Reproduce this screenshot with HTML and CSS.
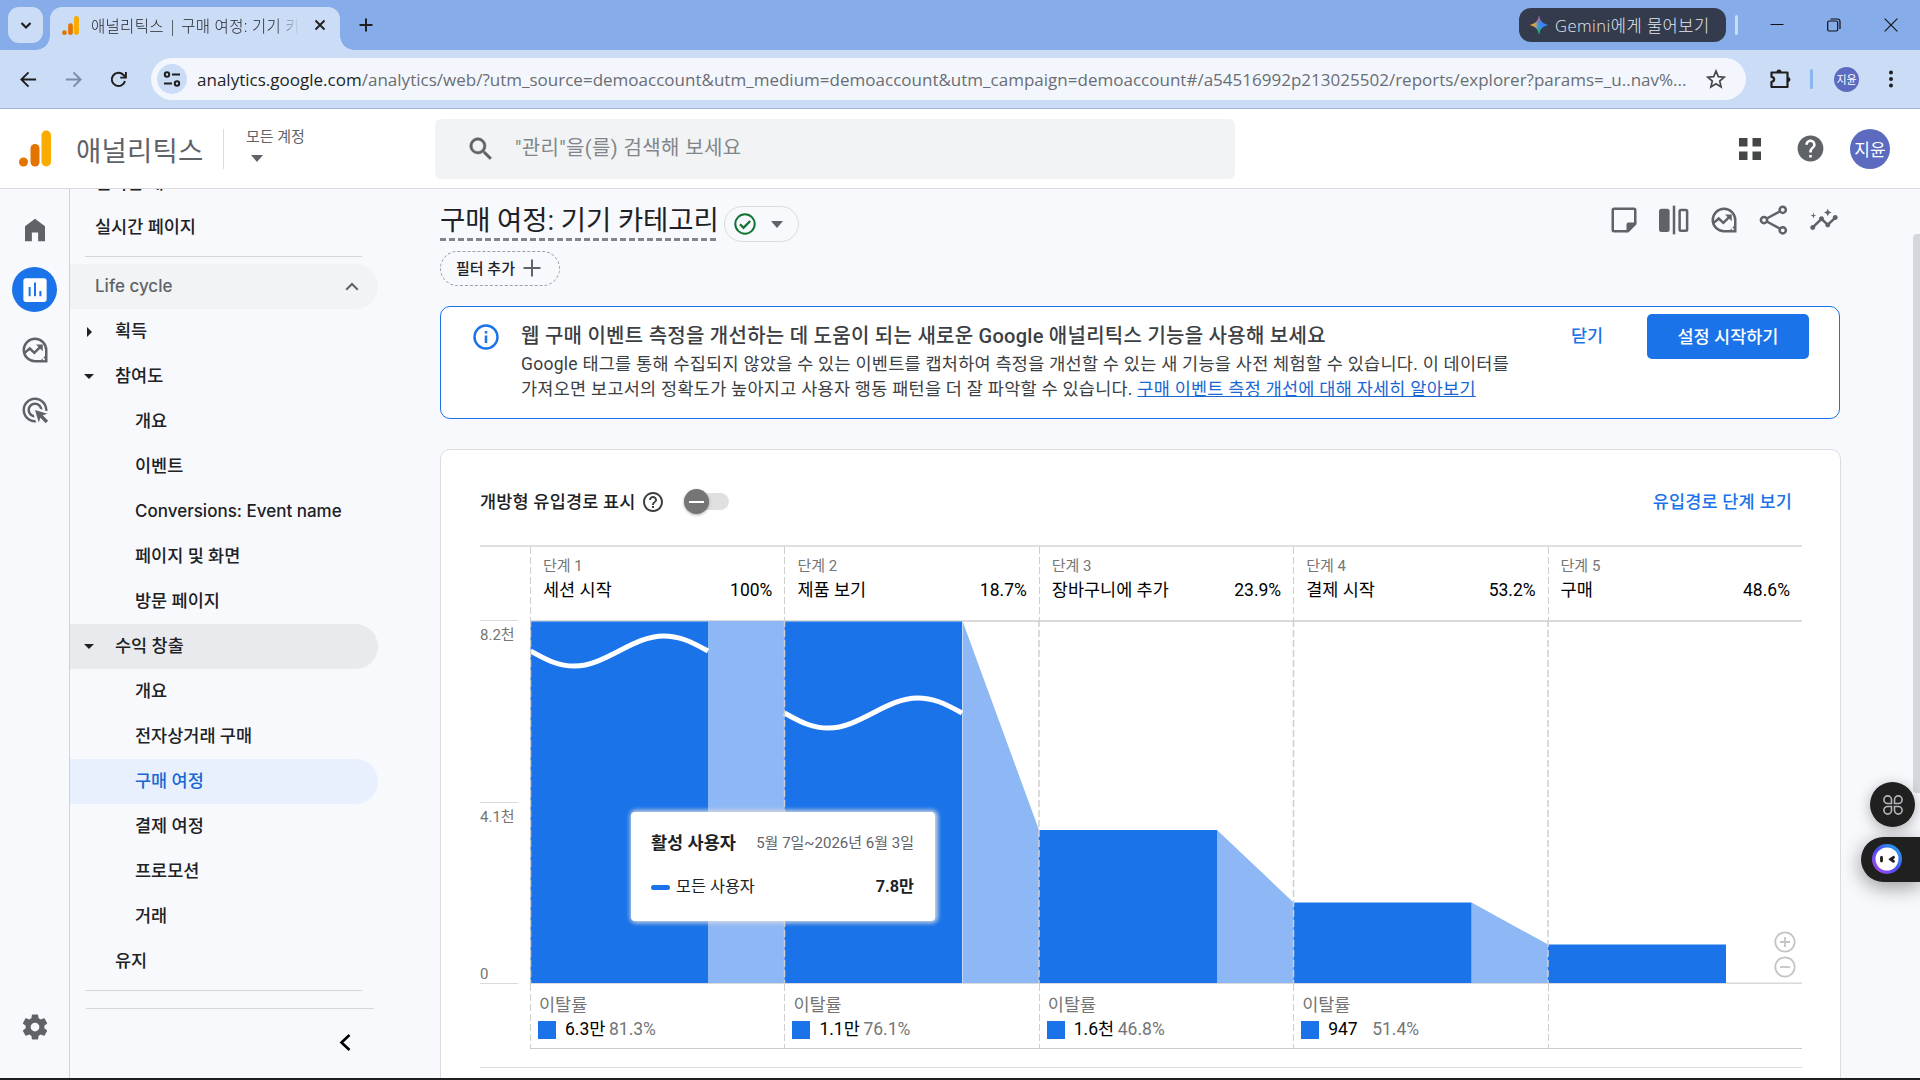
FILE: index.html
```html
<!DOCTYPE html>
<html lang="ko">
<head>
  <meta charset="UTF-8" />
  <meta name="viewport" content="width=device-width, initial-scale=1" />
  <title>애널리틱스 | 구매 여정: 기기 카테고리</title>
  <link rel="stylesheet" href="styles.css">
</head>
<body>

  <svg class="defs" aria-hidden="true">
    <symbol id="ga-logo" viewBox="0 0 32 36">
      <rect x="22.500" y="0" width="9.500" height="36" rx="4.700" fill="#f9ab00" />
      <rect x="11.500" y="13.500" width="9" height="22.500" rx="4.500" fill="#e37400" />
      <circle cx="4.500" cy="31.500" r="4.500" fill="#e37400" />
    </symbol>
    <symbol id="explore" viewBox="0 0 24 24">
      <path fill="none" stroke="currentColor" stroke-width="2" d="M21 12a9 9 0 1 0-9 9h9z" />
      <path fill="currentColor" d="M21 14v7h-7c3-.5 6-3 7-7z" />
      <circle cx="19" cy="19.300" r=".9" fill="#f8f9fc" />
      <path fill="none" stroke="currentColor" stroke-width="2" d="M3.500 14.500l4.300-3.700 3.700 3.500 5-5" />
      <path fill="currentColor" d="M12.800 7.500h5.400v5.400z" />
    </symbol>
  </svg>

  <!-- 브라우저 탭 -->
  <div class="tabstrip">
    <button class="tab-search" aria-label="탭 검색">
      <svg width="16" height="16" viewBox="0 0 16 16"><path d="M3.500 6l4.500 4.500L12.500 6" fill="none" stroke="#1f1f1f" stroke-width="2.200" /></svg>
    </button>
    <div class="tab">
      <svg class="favicon"><use href="#ga-logo" /></svg>
      <span class="tab-title">애널리틱스 | 구매 여정: 기기 카테고리</span>
      <svg width="12" height="12" viewBox="0 0 12 12"><path d="M1.500 1.500l9 9M10.500 1.500l-9 9" stroke="#1f1f1f" stroke-width="1.900" /></svg>
    </div>
    <svg class="new-tab" width="14" height="14" viewBox="0 0 14 14"><path d="M7 .5v13M.5 7h13" stroke="#1f1f1f" stroke-width="2" /></svg>
    <div class="window-side">
      <div class="gemini">
        <svg width="20" height="20" viewBox="0 0 20 20">
          <defs>
            <linearGradient id="gem" x1="0" y1=".5" x2="1" y2=".5">
              <stop offset="0" stop-color="#fbbc04" /><stop offset=".3" stop-color="#c8a35a" /><stop offset=".5" stop-color="#3b8bf5" /><stop offset="1" stop-color="#3186ff" />
            </linearGradient>
            <linearGradient id="gem-v" x1="0" y1="0" x2="0" y2="1">
              <stop offset="0" stop-color="#ee4d5d" /><stop offset=".42" stop-color="#ee4d5d" stop-opacity="0" /><stop offset=".6" stop-color="#0ebc5f" stop-opacity="0" /><stop offset=".85" stop-color="#0ebc5f" />
            </linearGradient>
          </defs>
          <path fill="url(#gem)" d="M10 .5c1 5.500 4 8.500 9.500 9.500-5.500 1-8.500 4-9.500 9.500C9 14 6 11 .5 10 6 9 9 6 10 .5z" />
          <path fill="url(#gem-v)" d="M10 .5c1 5.500 4 8.500 9.500 9.500-5.500 1-8.500 4-9.500 9.500C9 14 6 11 .5 10 6 9 9 6 10 .5z" />
        </svg>
        <span>Gemini에게 물어보기</span>
      </div>
      <i class="strip-sep"></i>
      <svg class="win" width="14" height="14" viewBox="0 0 14 14"><path d="M.5 6.500h13" stroke="#111" /></svg>
      <svg class="win" width="14" height="14" viewBox="0 0 14 14"><g fill="none" stroke="#111" stroke-width="1.200"><rect x=".7" y="3" width="10" height="10" rx="1.500" /><path d="M3.500 1h7a2.500 2.500 0 0 1 2.500 2.500v7.500" /></g></svg>
      <svg class="win" width="14" height="14" viewBox="0 0 14 14"><path d="M.7.7l12.600 12.600M13.300.7L.7 13.300" stroke="#111" stroke-width="1.100" /></svg>
    </div>
  </div>

  <!-- 주소 표시줄 -->
  <div class="toolbar">
    <svg class="nav-btn" viewBox="0 0 20 20"><path d="M18 10H3M10 2.500L2.500 10l7.500 7.500" fill="none" stroke="#1f1f1f" stroke-width="2" /></svg>
    <svg class="nav-btn" viewBox="0 0 20 20"><path d="M2 10h15M10 2.500l7.500 7.500-7.500 7.500" fill="none" stroke="#7c8ba6" stroke-width="2" /></svg>
    <svg class="nav-btn" viewBox="0 0 20 20"><path d="M16.800 11.500A7 7 0 1 1 15 5l2 2" fill="none" stroke="#1f1f1f" stroke-width="2.100" /><path d="M17.800 2v6h-6" fill="none" stroke="#1f1f1f" stroke-width="2" /></svg>
    <div class="omnibox">
      <span class="site-info">
        <svg width="18" height="18" viewBox="0 0 18 18"><g fill="none" stroke="#1f1f1f" stroke-width="2"><circle cx="4" cy="4.500" r="2.200" /><path d="M9 4.500h8M1 13.500h8" /><circle cx="14" cy="13.500" r="2.200" /></g></svg>
      </span>
      <span class="url"><b>analytics.google.com</b>/analytics/web/?utm_source=demoaccount&amp;utm_medium=demoaccount&amp;utm_campaign=demoaccount#/a54516992p213025502/reports/explorer?params=_u..nav%...</span>
      <svg width="20" height="20" viewBox="0 0 20 20"><path d="M10 2l2.300 5.600 6 .5-4.600 3.900 1.400 5.900L10 14.700l-5.100 3.200L6.300 12 1.700 8.100l6-.5z" fill="none" stroke="#474747" stroke-width="1.700" /></svg>
    </div>
    <svg class="puzzle" width="22" height="22" viewBox="0 0 22 22"><path d="M2.500 4.500h16v14.500h-16v-5.200c3.500-.4 3.500-4.600 0-5z" fill="none" stroke="#1f1f1f" stroke-width="2.200" stroke-linejoin="round" /><path d="M7.500 4a2.500 2.500 0 0 1 5 0zM19 9a2.500 2.500 0 0 1 0 5z" fill="#1f1f1f" /></svg>
    <i class="bar-sep"></i>
    <span class="avatar avatar-small">지윤</span>
    <svg class="more" width="6" height="18" viewBox="0 0 6 18"><g fill="#1f1f1f"><circle cx="3" cy="2.500" r="2" /><circle cx="3" cy="9" r="2" /><circle cx="3" cy="15.500" r="2" /></g></svg>
  </div>

  <header class="ga-header">
    <svg class="ga-logo"><use href="#ga-logo" /></svg>
    <span class="product">애널리틱스</span>
    <div class="account">
      <span>모든 계정</span>
      <i class="caret"></i>
    </div>
    <div class="search">
      <svg width="30" height="30" viewBox="0 0 24 24"><path fill="#5f6368" stroke="#5f6368" stroke-width=".4" d="M15.500 14h-.79l-.28-.27A6.471 6.471 0 0 0 16 9.500 6.500 6.500 0 1 0 9.500 16c1.610 0 3.090-.59 4.230-1.570l.27.28v.79l5 4.990L20.490 19l-4.990-5zm-6 0C7.010 14 5 11.990 5 9.500S7.010 5 9.500 5 14 7.010 14 9.500 11.990 14 9.500 14z" /></svg>
      <span>"관리"을(를) 검색해 보세요</span>
    </div>
    <div class="header-icons">
      <svg width="22" height="22" viewBox="0 0 22 22"><path fill="#444746" d="M0 0h8.500v8.500H0zM13.500 0H22v8.500h-8.500zM0 13.500h8.500V22H0zM13.500 13.500H22V22h-8.500z" /></svg>
      <svg width="31" height="31" viewBox="0 0 24 24"><path fill="#5f6368" d="M12 2C6.480 2 2 6.480 2 12s4.480 10 10 10 10-4.480 10-10S17.520 2 12 2zm1 17h-2v-2h2v2zm2.070-7.750l-.9.92C13.450 12.900 13 13.500 13 15h-2v-.5c0-1.100.45-2.100 1.170-2.830l1.240-1.260c.37-.36.59-.86.59-1.410 0-1.100-.9-2-2-2s-2 .9-2 2H8c0-2.210 1.790-4 4-4s4 1.790 4 4c0 .88-.36 1.680-.93 2.250z" /></svg>
      <span class="avatar">지윤</span>
    </div>
  </header>

  <div class="app">
    <nav class="rail" aria-label="기본 메뉴">
      <span class="rail-item"><svg viewBox="0 0 24 24"><path fill="currentColor" d="M4 21V9l8-6 8 6v12h-5.500v-7h-5v7z" /></svg></span>
      <span class="rail-item active"><svg viewBox="0 0 24 24"><path fill="currentColor" d="M19.300 2.500H4.700c-1.200 0-2 .9-2 2v15c0 1.200.8 2 2 2h14.600c1.100 0 2-.8 2-2v-15c0-1.100-.9-2-2-2zM8.500 17H6.900V9.500h1.600V17zm4.300 0h-1.600V6h1.600v11zm4.300 0h-1.600v-4.200h1.600V17z" /></svg></span>
      <span class="rail-item"><svg><use href="#explore" /></svg></span>
      <span class="rail-item"><svg viewBox="0 0 24 24"><path fill="currentColor" d="M11.710 17.990C8.530 17.840 6 15.220 6 12c0-3.310 2.690-6 6-6 3.220 0 5.840 2.530 5.990 5.710l-2.100-.63C15.480 9.310 13.890 8 12 8c-2.210 0-4 1.790-4 4 0 1.890 1.310 3.480 3.080 3.890l.63 2.100zM22 12c0 .3-.01.6-.04.9l-1.970-.59c.01-.1.01-.21.01-.31 0-4.420-3.580-8-8-8s-8 3.580-8 8 3.580 8 8 8c.1 0 .21 0 .31-.01l.59 1.970c-.3.03-.6.04-.9.04-5.520 0-10-4.480-10-10S6.480 2 12 2s10 4.480 10 10zm-3.770 4.260L22 15l-10-3 3 10 1.260-3.770 4.270 4.270 1.980-1.980-4.280-4.260z" /></svg></span>
      <span class="rail-item rail-settings"><svg viewBox="0 0 24 24"><path fill="currentColor" d="M19.430 12.980c.04-.32.07-.64.07-.98s-.03-.66-.07-.98l2.110-1.650c.19-.15.24-.42.12-.64l-2-3.460c-.12-.22-.39-.3-.61-.22l-2.490 1c-.52-.4-1.080-.73-1.690-.98l-.38-2.650A.488.488 0 0 0 14 2h-4c-.25 0-.46.18-.49.42l-.38 2.650c-.61.25-1.170.59-1.690.98l-2.490-1c-.23-.09-.49 0-.61.22l-2 3.460c-.13.22-.07.49.12.64l2.110 1.650c-.04.32-.07.65-.07.98s.03.66.07.98l-2.110 1.650c-.19.15-.24.42-.12.64l2 3.460c.12.22.39.3.61.22l2.490-1c.52.4 1.080.73 1.690.98l.38 2.650c.03.24.24.42.49.42h4c.25 0 .46-.18.49-.42l.38-2.650c.61-.25 1.170-.59 1.690-.98l2.490 1c.23.09.49 0 .61-.22l2-3.460c.12-.22.07-.49-.12-.64l-2.110-1.650zM12 15.500c-1.930 0-3.500-1.570-3.500-3.500s1.570-3.500 3.500-3.500 3.500 1.570 3.500 3.500-1.570 3.500-3.500 3.500z" /></svg></span>
    </nav>

    <nav class="sidenav" aria-label="보고서">
      <div class="row top scrolled">실시간 개요</div>
      <div class="row top">실시간 페이지</div>
      <hr>
      <div class="row section">Life cycle
        <svg width="14" height="9" viewBox="0 0 14 9"><path d="M1.200 7.800L7 2l5.800 5.800" fill="none" stroke="#5f6368" stroke-width="2" /></svg>
      </div>
      <div class="row group closed">획득</div>
      <div class="row group open">참여도</div>
      <div class="row">개요</div>
      <div class="row">이벤트</div>
      <div class="row latin">Conversions: Event name</div>
      <div class="row">페이지 및 화면</div>
      <div class="row">방문 페이지</div>
      <div class="row group open hovered">수익 창출</div>
      <div class="row">개요</div>
      <div class="row">전자상거래 구매</div>
      <div class="row selected">구매 여정</div>
      <div class="row">결제 여정</div>
      <div class="row">프로모션</div>
      <div class="row">거래</div>
      <div class="row group">유지</div>
      <hr>
      <div class="collapse">
        <svg width="12" height="17" viewBox="0 0 12 17"><path d="M10.500 1L2.500 8.500l8 7.500" fill="none" stroke="#000" stroke-width="2.600" /></svg>
      </div>
    </nav>

    <main class="report">
      <div class="title-row">
        <h1>구매 여정: 기기 카테고리</h1>
        <span class="status">
          <svg width="22" height="22" viewBox="0 0 22 22"><g fill="none" stroke="#137333" stroke-width="2"><circle cx="11" cy="11" r="9.700" /><path d="M6 11.300l3.500 3.500L16.200 8" stroke-width="2.300" /></g></svg>
          <i class="caret"></i>
        </span>
        <div class="actions">
          <svg viewBox="0 0 24 24"><path fill="none" stroke="currentColor" stroke-width="2" stroke-linejoin="round" d="M4 3h16a1 1 0 0 1 1 1v11l-6 6H4a1 1 0 0 1-1-1V4a1 1 0 0 1 1-1z" /><path fill="currentColor" d="M14 22v-6.500q0-1.500 1.500-1.500H22z" /></svg>
          <svg viewBox="0 0 24 24"><rect x="0" y="3" width="8.500" height="18.500" rx="2" fill="currentColor" /><path d="M12 .5v23" stroke="currentColor" stroke-width="2" /><rect x="16.500" y="4" width="6" height="16.500" rx="1" fill="none" stroke="currentColor" stroke-width="2" /></svg>
          <svg><use href="#explore" /></svg>
          <svg viewBox="0 0 24 24"><g fill="none" stroke="currentColor" stroke-width="2"><circle cx="4" cy="12" r="2.500" /><circle cx="19" cy="3.800" r="2.500" /><circle cx="19" cy="20.200" r="2.500" /><path d="M6.200 10.800l10.600-5.800M6.200 13.200l10.600 5.800" /></g></svg>
          <svg viewBox="0 0 24 24"><path fill="currentColor" d="M21 8c-1.450 0-2.260 1.440-1.930 2.510l-3.550 3.560c-.3-.09-.74-.09-1.040 0l-2.550-2.550C12.270 10.450 11.460 9 10 9c-1.450 0-2.270 1.440-1.930 2.520l-4.560 4.550C2.440 15.740 1 16.550 1 18c0 1.100.9 2 2 2 1.450 0 2.260-1.440 1.930-2.510l4.550-4.560c.3.09.74.09 1.040 0l2.550 2.550C12.730 16.550 13.540 18 15 18c1.450 0 2.270-1.440 1.930-2.520l3.560-3.550c1.070.33 2.510-.48 2.510-1.930 0-1.100-.9-2-2-2zM15 9l.94-2.070L18 6l-2.060-.93L15 3l-.92 2.070L12 6l2.080.93zM3.500 11L4 9l2-.5L4 8l-.5-2L3 8l-2 .5L3 9z" /></svg>
        </div>
      </div>

      <div class="filter-chip">필터 추가
        <svg width="18" height="18" viewBox="0 0 18 18"><path d="M9 .5v17M.5 9h17" stroke="#5f6368" stroke-width="2" /></svg>
      </div>

      <section class="banner">
        <svg class="info" width="26" height="26" viewBox="0 0 26 26"><circle cx="13" cy="13" r="11.500" fill="none" stroke="#1a73e8" stroke-width="2.400" /><path d="M13 11.500v7.500M13 7v2.600" stroke="#1a73e8" stroke-width="2.500" /></svg>
        <div class="banner-text">
          <h2>웹 구매 이벤트 측정을 개선하는 데 도움이 되는 새로운 Google 애널리틱스 기능을 사용해 보세요</h2>
          <p>Google 태그를 통해 수집되지 않았을 수 있는 이벤트를 캡처하여 측정을 개선할 수 있는 새 기능을 사전 체험할 수 있습니다. 이 데이터를<br>가져오면 보고서의 정확도가 높아지고 사용자 행동 패턴을 더 잘 파악할 수 있습니다. <a>구매 이벤트 측정 개선에 대해 자세히 알아보기</a></p>
        </div>
        <span class="dismiss">닫기</span>
        <button class="start">설정 시작하기</button>
      </section>

      <section class="card">
        <div class="card-head">
          <span>개방형 유입경로 표시</span>
          <svg width="24" height="24" viewBox="0 0 24 24"><path fill="#3c4043" d="M11 18h2v-2h-2v2zm1-16C6.480 2 2 6.480 2 12s4.480 10 10 10 10-4.480 10-10S17.520 2 12 2zm0 18c-4.410 0-8-3.590-8-8s3.590-8 8-8 8 3.590 8 8-3.590 8-8 8zm0-14c-2.210 0-4 1.790-4 4h2c0-1.100.9-2 2-2s2 .9 2 2c0 2-3 1.750-3 5h2c0-2.250 3-2.500 3-5 0-2.210-1.790-4-4-4z" /></svg>
          <span class="toggle"><i></i></span>
          <a class="steps-link">유입경로 단계 보기</a>
        </div>

        <div class="funnel">
          <div class="steps">
            <div class="step"><small>단계 1</small><p>세션 시작<b>100%</b></p></div>
            <div class="step"><small>단계 2</small><p>제품 보기<b>18.7%</b></p></div>
            <div class="step"><small>단계 3</small><p>장바구니에 추가<b>23.9%</b></p></div>
            <div class="step"><small>단계 4</small><p>결제 시작<b>53.2%</b></p></div>
            <div class="step"><small>단계 5</small><p>구매<b>48.6%</b></p></div>
          </div>
          <div class="plot">
            <div class="axis">
              <span>8.2천</span>
              <span>4.1천</span>
              <span class="zero">0</span>
            </div>
            <svg width="1272" height="364" viewBox="0 0 1272 364">
              <path d="M0 1h1272M0 363.500h1272" stroke="#dadada" stroke-width="2" />
              <g fill="#8db7f5">
                <path d="M178 1h76.500v362H178z" />
                <path d="M432.500 1L509 210v153h-76.500z" />
                <path d="M687 210l76.500 72.500V363H687z" />
                <path d="M941.500 282.500l76.500 42V363h-76.500z" />
              </g>
              <g fill="#1a73e8">
                <path d="M.5 1.500H178V363H.5z" />
                <path d="M254.500 1.500H432V363H254.500z" />
                <path d="M509 210h178v153H509z" />
                <path d="M763.500 282.500h178V363h-178z" />
                <path d="M1018 324.500h178V363h-178z" />
              </g>
              <g fill="none" stroke="#fff" stroke-width="5">
                <path d="M.5 31C18 41 29 46 44.500 46c31 0 58-30 89-30C149 16 160 21 178 31" />
                <path d="M254.500 93c17.500 10 28.500 15 44 15 31 0 58-30 89-30 15.500 0 26.500 5 44.500 15" />
              </g>
              <path class="guides" d="M.5 0v364M254.500 0v364M509 0v364M763.500 0v364M1018 0v364" />
              <g fill="none" stroke="#c4c4c4" stroke-width="1.800">
                <circle cx="1255" cy="322" r="9.700" /><path d="M1255 317v10M1250 322h10" />
                <circle cx="1255" cy="347" r="9.700" /><path d="M1250 347h10" />
              </g>
            </svg>
          </div>
          <div class="drops">
            <div class="drop"><small>이탈률</small><p><i></i><b>6.3만</b><span>81.3%</span></p></div>
            <div class="drop"><small>이탈률</small><p><i></i><b>1.1만</b><span>76.1%</span></p></div>
            <div class="drop"><small>이탈률</small><p><i></i><b>1.6천</b><span>46.8%</span></p></div>
            <div class="drop"><small>이탈률</small><p><i></i><b>947</b><span>51.4%</span></p></div>
            <div class="drop"></div>
          </div>

          <div class="tooltip">
            <div class="tip-head"><b>활성 사용자</b><span>5월 7일~2026년 6월 3일</span></div>
            <div class="tip-row"><i></i><span>모든 사용자</span><b>7.8만</b></div>
          </div>
        </div>
      </section>
    </main>
  </div>

  <i class="scroll-thumb"></i>
  <div class="float-btn">
    <svg width="20" height="20" viewBox="0 0 20 20"><g fill="none" stroke="#b5b5ba" stroke-width="1.600"><path d="M8.500 8.500H4.700a3.800 3.800 0 1 1 3.800-3.800zM11.500 8.500V4.700a3.800 3.800 0 1 1 3.800 3.800zM8.500 11.500v3.800a3.800 3.800 0 1 1-3.800-3.800zM11.500 11.500h3.800a3.800 3.800 0 1 1-3.800 3.800z" /></g></svg>
  </div>
  <div class="float-pill">
    <span class="face"><svg width="24" height="24" viewBox="0 0 24 24"><circle cx="12" cy="12" r="11.500" fill="#fff" /><path d="M6.500 10.500v3.500M18.500 10.300l-2.800 2 2.800 2" fill="none" stroke="#1b1b1b" stroke-width="2.800" stroke-linecap="round" /></svg></span>
  </div>
  <i class="taskbar-edge"></i>

</body>
</html>
```
FILE: styles.css
```css
* {
  box-sizing: border-box;
}
body {
  margin: 0;
  width: 1920px;
  height: 1080px;
  overflow: hidden;
  position: relative;
  display: flex;
  flex-direction: column;
  font-family: Roboto, 'Noto Sans CJK KR', sans-serif;
  font-size: 17.5px;
  color: #202124;
  background: #f8f9fc;
}
h1, h2, p {
  margin: 0;
}
svg {
  flex: none;
  display: block;
}
.defs {
  position: absolute;
  width: 0;
  height: 0;
}
.caret {
  border: 6px solid transparent;
  border-top: 7px solid #5f6368;
  border-bottom: 0;
}
.avatar {
  width: 40px;
  height: 40px;
  border-radius: 50%;
  background: #5c6bc0;
  color: #fff;
  font-size: 17px;
  display: flex;
  align-items: center;
  justify-content: center;
}

/* Tab strip */
.tabstrip {
  height: 50px;
  flex: none;
  display: flex;
  background: #86ace9;
  padding: 7px 22px 0 8px;
  font-family: 'Open Sans', 'Noto Sans CJK KR', sans-serif;
}
.tab-search {
  width: 35px;
  height: 36px;
  border: 0;
  border-radius: 11px;
  background: #cbdcf6;
  padding: 0;
  display: flex;
  align-items: center;
  justify-content: center;
}
.tab {
  position: relative;
  width: 290px;
  margin-left: 7px;
  border-radius: 12px 12px 0 0;
  background: #cbdcf6;
  display: flex;
  align-items: center;
  padding: 0 14px 7px 12px;
}
.tab::before, .tab::after {
  content: "";
  position: absolute;
  bottom: 0;
  left: -14px;
  width: 14px;
  height: 14px;
  background: radial-gradient(circle at 0 0, transparent 13.5px, #cbdcf6 14px);
}
.tab::after {
  left: auto;
  right: -14px;
  background: radial-gradient(circle at 100% 0, transparent 13.5px, #cbdcf6 14px);
}
.favicon {
  width: 17px;
  height: 19px;
}
.tab-title {
  width: 211px;
  margin: 1px 12px 0;
  overflow: hidden;
  white-space: nowrap;
  font-size: 15.5px;
  font-weight: 300;
  letter-spacing: 0.3px;
  color: #1f1f1f;
  -webkit-mask-image: linear-gradient(90deg, #000 185px, transparent 208px);
  mask-image: linear-gradient(90deg, #000 185px, transparent 208px);
}
.new-tab {
  margin: 11px 0 0 19px;
}
.window-side {
  margin-left: auto;
  display: flex;
  align-items: flex-start;
}
.gemini {
  width: 207px;
  height: 34px;
  margin-top: 1px;
  padding-left: 10px;
  border-radius: 12px;
  background: #333b4d;
  color: #e4e8f0;
  display: flex;
  align-items: center;
  gap: 6px;
  font-size: 16.5px;
  font-weight: 300;
  letter-spacing: 0.5px;
  white-space: nowrap;
}
.strip-sep {
  width: 3px;
  height: 20px;
  margin: 8px 32px 0 9px;
  border-radius: 2px;
  background: #cbdcf6;
}
.win {
  margin-top: 11px;
}
.win + .win {
  margin-left: 43px;
}

/* Address bar */
.toolbar {
  height: 59px;
  flex: none;
  display: flex;
  align-items: center;
  background: #cbdcf6;
  border-bottom: 1px solid #a1b1d3;
  padding-left: 19px;
}
.nav-btn {
  width: 19px;
  height: 19px;
  margin-right: 26px;
}
.nav-btn + .nav-btn + .nav-btn {
  margin-right: 23px;
}
.omnibox {
  width: 1595px;
  height: 42px;
  border-radius: 21px;
  background: #f3f7fd;
  display: flex;
  align-items: center;
  padding-left: 6px;
}
.site-info {
  width: 30px;
  height: 30px;
  border-radius: 50%;
  background: #cbdcf6;
  display: flex;
  align-items: center;
  justify-content: center;
}
.url {
  width: 1509px;
  margin-left: 10px;
  font-family: 'Open Sans', sans-serif;
  font-size: 17px;
  letter-spacing: 0.01px;
  white-space: nowrap;
  color: #6a6d73;
}
.url b {
  font-weight: 400;
  color: #1f1f1f;
}
.puzzle {
  margin-left: 23px;
}
.bar-sep {
  width: 3px;
  height: 20px;
  margin: 0 21px 0 19px;
  border-radius: 2px;
  background: #8db5f0;
}
.avatar-small {
  width: 25px;
  height: 25px;
  font-size: 11px;
}
.more {
  margin-left: 29px;
}

/* Analytics header */
.ga-header {
  height: 80px;
  flex: none;
  display: flex;
  align-items: center;
  background: #fff;
  border-bottom: 1px solid #dadce0;
  padding-left: 19px;
  position: relative;
  z-index: 2;
}
.ga-logo {
  width: 32px;
  height: 37px;
}
.product {
  width: 147px;
  margin-left: 25px;
  font-size: 27.5px;
  letter-spacing: 0.2px;
  color: #5f6368;
}
.account {
  width: 212px;
  height: 40px;
  border-left: 1px solid #dadce0;
  padding: 1px 0 0 22px;
  font-size: 15px;
  line-height: 15px;
  color: #5f6368;
}
.account span {
  display: block;
}
.account .caret {
  display: block;
  width: 0;
  margin: 10px 0 0 5px;
}
.search {
  width: 800px;
  height: 60px;
  border-radius: 6px;
  background: #f1f3f4;
  display: flex;
  align-items: center;
  gap: 19px;
  padding-left: 31px;
  font-size: 20px;
  letter-spacing: 0.37px;
  color: #80868b;
}
.search span {
  margin-top: -5px;
}
.header-icons {
  margin-left: auto;
  margin-right: 30px;
  display: flex;
  align-items: center;
}
.header-icons svg + svg {
  margin: 0 24px 0 34px;
}

/* Left rail */
.app {
  flex: 1;
  min-height: 0;
  display: flex;
}
.rail {
  width: 70px;
  border-right: 1px solid #d0d2d6;
  color: #5f6368;
  display: flex;
  flex-direction: column;
  align-items: center;
  padding: 18px 0 31px;
  gap: 15px;
}
.rail-item {
  width: 45px;
  height: 45px;
  border-radius: 50%;
  display: flex;
  align-items: center;
  justify-content: center;
}
.rail-item svg {
  width: 30px;
  height: 30px;
}
.rail-item.active {
  background: #1a73e8;
  color: #fff;
}
.rail-settings {
  margin-top: auto;
}

/* Report navigation */
.sidenav {
  width: 308px;
  margin-top: -29px;
  font-weight: 500;
}
.row {
  height: 45px;
  padding-left: 65px;
  border-radius: 0 23px 23px 0;
  display: flex;
  align-items: center;
  line-height: 1;
}
.row.top {
  padding-left: 25px;
}
.row.scrolled {
  padding-top: 3px;
}
.row.section {
  padding: 0 19px 0 25px;
  justify-content: space-between;
  background: #f1f3f4;
  color: #5f6368;
  font-family: Inter, sans-serif;
  font-size: 17px;
}
.row.latin {
  font-family: Inter, sans-serif;
  font-size: 17px;
}
.row.group {
  padding-left: 45px;
}
.row.group::before {
  content: "";
  width: 10px;
  margin-left: -31px;
  margin-right: 21px;
}
.row.group.open::before {
  width: 0;
  border: 5px solid transparent;
  border-top-color: #202124;
  border-bottom: 0;
}
.row.group.closed::before {
  width: 0;
  margin-left: -28px;
  margin-right: 23px;
  border: 5px solid transparent;
  border-left-color: #202124;
  border-right: 0;
}
.row.hovered {
  background: #e8eaed;
}
.row.selected {
  background: #e8f0fe;
  color: #1967d2;
}
.sidenav hr {
  width: 277px;
  height: 1px;
  margin: 6px 0 7px 15px;
  border: 0;
  background: #d5d7db;
}
.collapse {
  width: 288px;
  margin: 17px 0 0 16px;
  border-top: 1px solid #d5d7db;
  padding: 25px 23px 0 0;
  display: flex;
  justify-content: flex-end;
}

/* Report */
.report {
  width: 1401px;
  margin-left: 62px;
  padding-top: 12px;
}
.title-row {
  height: 41px;
  display: flex;
  align-items: flex-start;
}
h1 {
  width: 278px;
  height: 40px;
  font-size: 27.5px;
  line-height: 39px;
  letter-spacing: -0.1px;
  font-weight: 400;
  white-space: nowrap;
  background: repeating-linear-gradient(90deg, #80868b 0 6px, transparent 6px 9px) left bottom / 100% 3px no-repeat;
}
.status {
  width: 75px;
  height: 36px;
  margin: 5px 0 0 6px;
  border: 1px solid #dadce0;
  border-radius: 18px;
  display: flex;
  align-items: center;
  gap: 15px;
  padding-left: 9px;
}
.actions {
  margin: 4px 0 0 auto;
  padding-right: 2px;
  display: flex;
  gap: 20px;
  color: #5f6368;
}
.actions svg {
  width: 30px;
  height: 30px;
}
.filter-chip {
  width: 120px;
  height: 35px;
  margin-top: 9px;
  border: 1px dashed #9aa0a6;
  border-radius: 18px;
  padding: 0 0 2px 15px;
  display: flex;
  align-items: center;
  gap: 8px;
  font-size: 15px;
  font-weight: 500;
}
.banner {
  width: 1400px;
  height: 113px;
  margin-top: 20px;
  border: 1px solid #1a73e8;
  border-radius: 10px;
  background: #fff;
  display: flex;
  align-items: flex-start;
  padding: 7px 30px 0 32px;
}
.info {
  margin: 10px 22px 0 0;
}
.banner-text {
  width: 1050px;
  margin-top: 7px;
  white-space: nowrap;
  letter-spacing: 0.26px;
  color: #3c4043;
}
h2 {
  font-size: 20px;
  line-height: 31px;
  font-weight: 500;
}
.banner-text p {
  line-height: 25px;
}
.banner-text a {
  color: #1967d2;
  text-decoration: underline;
}
.dismiss {
  margin-top: 9px;
  line-height: 26px;
  font-weight: 500;
  color: #1a73e8;
}
.start {
  width: 162px;
  height: 45px;
  margin-left: auto;
  padding-bottom: 3px;
  border: 0;
  border-radius: 5px;
  background: #1a73e8;
  color: #fff;
  font: 500 17.5px Roboto, 'Noto Sans CJK KR', sans-serif;
}

/* Funnel card */
.card {
  height: 660px;
  margin-top: 30px;
  border: 1px solid #dadce0;
  border-radius: 10px;
  background: #fff;
  padding: 0 38px 0 39px;
}
.card-head {
  height: 95px;
  padding-top: 8px;
  display: flex;
  align-items: center;
  font-weight: 500;
  letter-spacing: 0.18px;
}
.card-head > span:first-child, .steps-link {
  margin-top: -2px;
}
.card-head svg {
  margin: 1px 19px 0 5px;
}
.toggle {
  width: 45px;
  height: 17px;
  border-radius: 9px;
  background: #e0e0e0;
  display: flex;
  align-items: center;
}
.toggle i {
  width: 25px;
  height: 25px;
  border-radius: 50%;
  background: linear-gradient(#fff, #fff) center / 15px 2px no-repeat #757575;
  box-shadow: 0 1px 3px rgba(0, 0, 0, 0.35);
}
.steps-link {
  margin-left: auto;
  margin-right: 10px;
  color: #1a73e8;
}
.funnel {
  position: relative;
  width: 1322px;
}
.steps, .drops {
  display: grid;
  grid-template-columns: repeat(5, 254.4px);
  padding-left: 50px;
}
.steps {
  height: 75px;
  border-top: 2px solid #e0e0e0;
}
.step, .drop {
  background: repeating-linear-gradient(#cfcfcf 0 7px, transparent 7px 10px) left top / 1px 100% no-repeat;
}
.step {
  padding: 8px 12px 0 13px;
}
.step small {
  display: block;
  font-size: 15px;
  line-height: 22px;
  color: #757575;
}
.step p {
  display: flex;
  justify-content: space-between;
  line-height: 27px;
  color: #000;
}
.step b, .drop b {
  font-weight: 400;
}
.plot {
  display: flex;
}
.axis {
  width: 50px;
  height: 364px;
  display: flex;
  flex-direction: column;
  font-size: 15px;
  line-height: 29px;
  color: #757575;
}
.axis span {
  width: 38px;
  height: 182px;
  border-top: 1px solid #dadada;
  white-space: nowrap;
}
.axis .zero {
  height: 23px;
  margin-top: -23px;
  line-height: 27px;
  border-top: 0;
  border-bottom: 1px solid #dadada;
}
.guides {
  fill: none;
  stroke: #cfcfcf;
  stroke-width: 1.5;
  stroke-dasharray: 7 3;
}
.drops {
  height: 84px;
  border-bottom: 1px solid #dadada;
}
.drop {
  height: 65px;
  padding: 9px 0 0 8px;
  border-bottom: 1px solid #ccc;
}
.drop small {
  display: block;
  padding-left: 1px;
  font-size: 17.5px;
  line-height: 24px;
  color: #757575;
}
.drop p {
  display: flex;
  align-items: center;
  line-height: 25px;
  color: #757575;
}
.drop i {
  width: 18px;
  height: 18px;
  margin-right: 9px;
  background: #1a73e8;
}
.drop b {
  width: 44px;
  color: #000;
}

/* Tooltip */
.tooltip {
  position: absolute;
  left: 151px;
  top: 267px;
  width: 304px;
  height: 109px;
  border-radius: 4px;
  background: #fff;
  box-shadow: 1px 0 4px 2px rgba(218, 220, 224, 0.9);
  padding: 18px 21px 0 20px;
}
.tip-head, .tip-row {
  display: flex;
  align-items: center;
  justify-content: space-between;
  line-height: 26px;
}
.tip-head span {
  font-size: 15px;
  color: #5f6368;
}
.tip-row {
  margin-top: 18px;
  font-size: 16.25px;
}
.tip-row i {
  width: 19px;
  height: 5px;
  border-radius: 3px;
  background: #1a73e8;
  margin-right: 6px;
}
.tip-row b {
  margin-left: auto;
}

/* Things floating over the page */
.scroll-thumb {
  position: absolute;
  right: 0;
  top: 234px;
  width: 7px;
  height: 559px;
  border-radius: 4px 0 0 4px;
  background: #d5d7dc;
}
.float-btn {
  position: absolute;
  left: 1870px;
  top: 782px;
  width: 45px;
  height: 45px;
  border-radius: 50%;
  background: #202020;
  box-shadow: 0 3px 14px rgba(0, 0, 0, 0.3);
  display: flex;
  align-items: center;
  justify-content: center;
}
.float-pill {
  position: absolute;
  right: 0;
  top: 837px;
  width: 59px;
  height: 45px;
  border-radius: 23px 0 0 23px;
  background: #202020;
  box-shadow: 0 5px 20px rgba(0, 0, 0, 0.4);
  padding: 7px 0 0 11px;
}
.face {
  width: 30px;
  height: 30px;
  border-radius: 50%;
  background: linear-gradient(to top right, #b94bf0, #4a4cf5 50%, #19b9e6);
  display: flex;
  align-items: center;
  justify-content: center;
}
.taskbar-edge {
  position: absolute;
  left: 0;
  bottom: 0;
  width: 100%;
  height: 2px;
  background: #1f1f1f;
}
```
